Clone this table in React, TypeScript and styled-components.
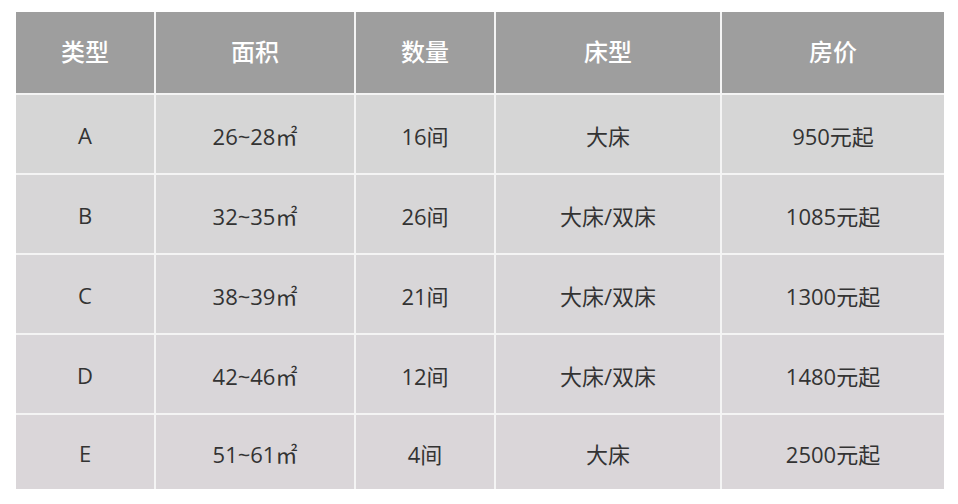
import React from 'react';
import styled, { createGlobalStyle } from 'styled-components';

const GlobalStyle = createGlobalStyle`
  html, body {
    margin: 0;
    padding: 0;
    background: #ffffff;
  }
  body {
    font-family: "Open Sans", "Noto Sans CJK SC", sans-serif;
  }
`;

const rooms = [
  { type: 'A', area: '26~28㎡', count: '16间', bed: '大床', price: '950元起', tone: '#d6d6d6' },
  { type: 'B', area: '32~35㎡', count: '26间', bed: '大床/双床', price: '1085元起', tone: '#d7d6d7' },
  { type: 'C', area: '38~39㎡', count: '21间', bed: '大床/双床', price: '1300元起', tone: '#d8d6d8' },
  { type: 'D', area: '42~46㎡', count: '12间', bed: '大床/双床', price: '1480元起', tone: '#d9d6d9' },
  { type: 'E', area: '51~61㎡', count: '4间', bed: '大床', price: '2500元起', tone: '#dad6d9' },
];

const headers = ['类型', '面积', '数量', '床型', '房价'];

const Page = styled.div`
  padding: 12px 0 0 16px;
`;

const Table = styled.div`
  display: grid;
  width: 928px;
  grid-template-columns: 138px 198px 138px 224px 222px;
  grid-template-rows: 81px repeat(4, 78px) 74px;
  gap: 2px;
  background: #f4f4f4;
`;

const HeadCell = styled.div`
  display: flex;
  align-items: center;
  justify-content: center;
  background: #9e9e9e;
  color: #ffffff;
  font-family: "Noto Sans CJK SC", sans-serif;
  font-size: 24px;
  font-weight: 500;
  padding-bottom: 4px;
`;

const Cell = styled.div<{ $tone: string }>`
  display: flex;
  align-items: center;
  justify-content: center;
  background: ${({ $tone }) => $tone};
  color: #333333;
  font-family: "Open Sans", "Noto Sans CJK SC", sans-serif;
  font-size: 22px;
  padding-top: 2px;
`;

export default function App() {
  return (
    <>
      <GlobalStyle />
      <Page>
        <Table>
          {headers.map((h) => (
            <HeadCell key={h}>{h}</HeadCell>
          ))}
          {rooms.map((r) => (
            <React.Fragment key={r.type}>
              <Cell $tone={r.tone}>{r.type}</Cell>
              <Cell $tone={r.tone}>{r.area}</Cell>
              <Cell $tone={r.tone}>{r.count}</Cell>
              <Cell $tone={r.tone}>{r.bed}</Cell>
              <Cell $tone={r.tone}>{r.price}</Cell>
            </React.Fragment>
          ))}
        </Table>
      </Page>
    </>
  );
}
